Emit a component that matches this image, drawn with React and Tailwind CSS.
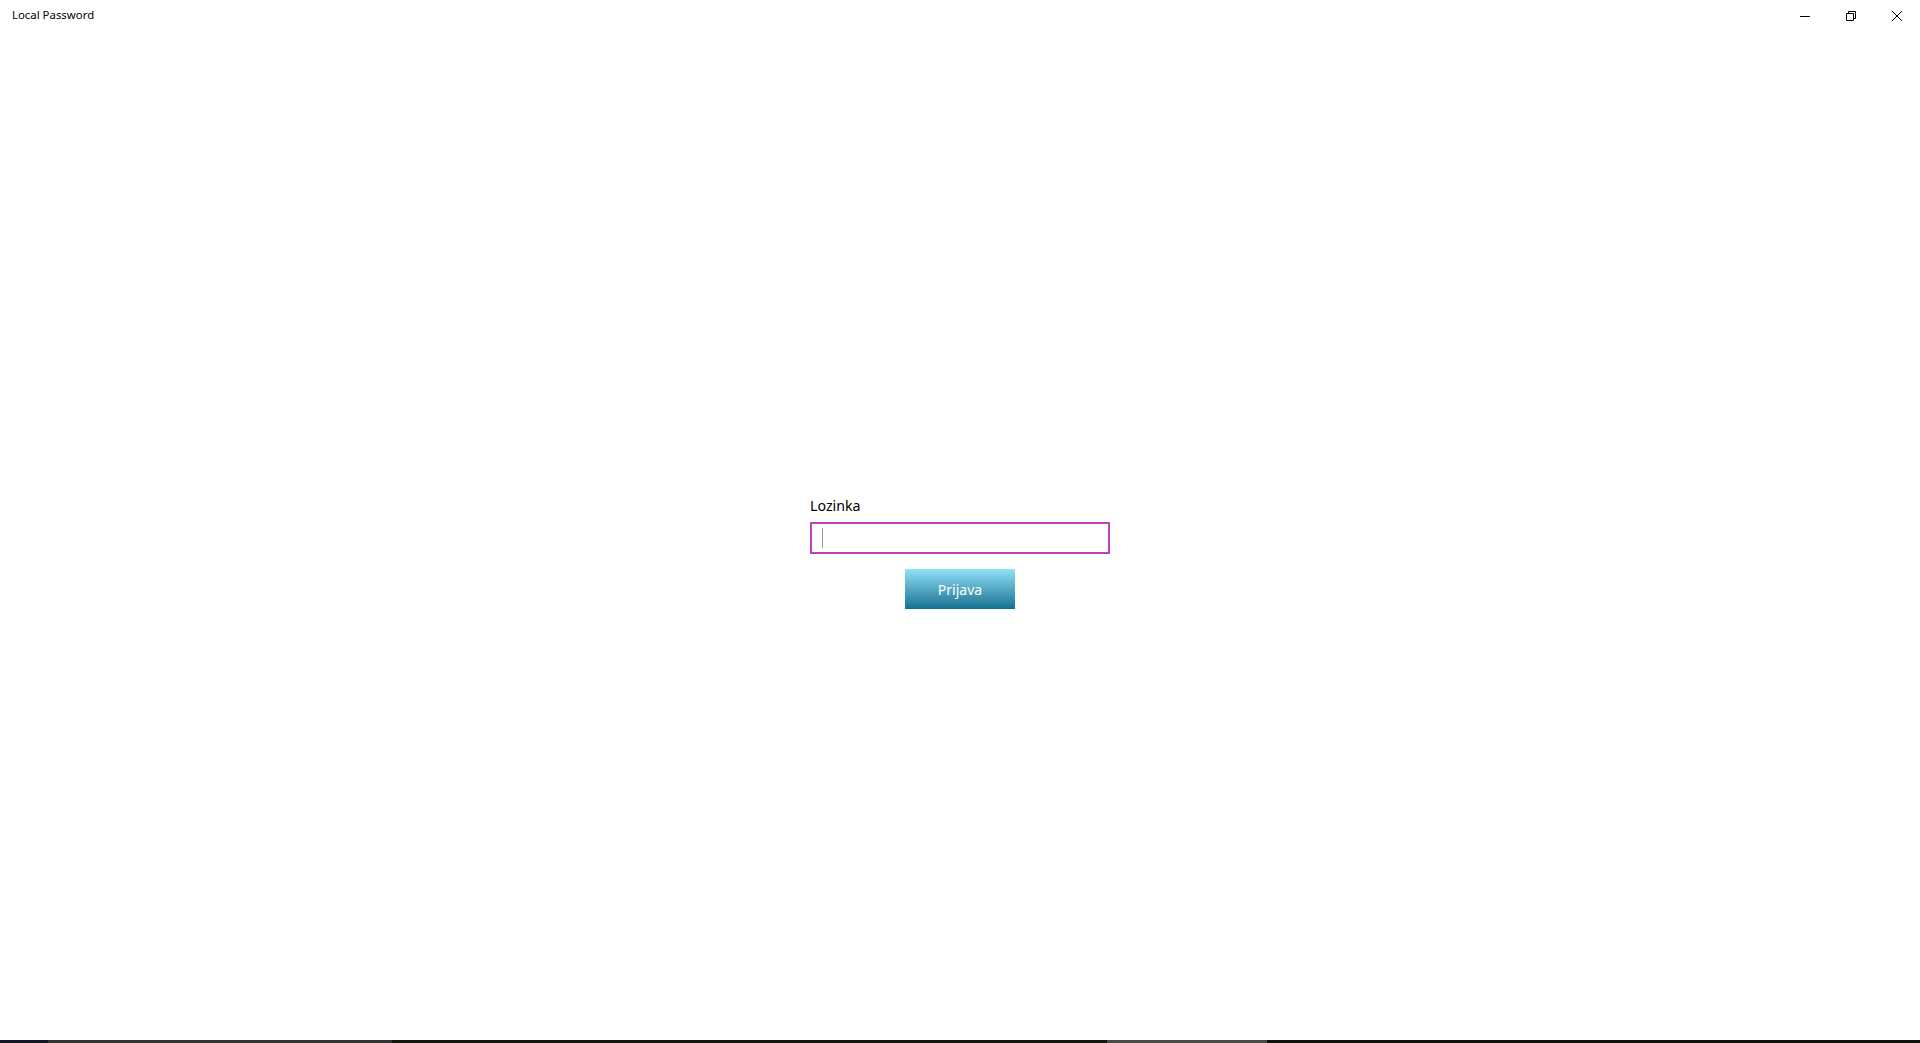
export default function App() {
  return (
    <div
      className="flex h-[1043px] w-[1920px] flex-col overflow-hidden bg-white text-black"
      style={{ fontFamily: '"Segoe UI", "Noto Sans", sans-serif' }}
    >
      {/* title bar */}
      <div className="flex h-8 shrink-0 items-center justify-between">
        <span className="pb-[2px] pl-3 text-[11.4px]">Local Password</span>
        <div className="flex h-8">
          <div className="flex w-[46px] items-center justify-center">
            <svg width="10" height="10" viewBox="0 0 10 10">
              <path d="M0 5.5h10" stroke="#000" strokeWidth="1" />
            </svg>
          </div>
          <div className="flex w-[46px] items-center justify-center">
            <svg width="10" height="10" viewBox="0 0 10 10" fill="none" stroke="#000" strokeWidth="1">
              <path d="M0.5 2.5h7v7h-7z" />
              <path d="M2.5 2.5v-2h7v7h-2" />
            </svg>
          </div>
          <div className="flex w-[46px] items-center justify-center">
            <svg width="10" height="10" viewBox="0 0 10 10">
              <path d="M0 0L10 10M10 0L0 10" stroke="#000" strokeWidth="1" />
            </svg>
          </div>
        </div>
      </div>

      {/* content */}
      <div className="flex flex-1 items-center justify-center pt-[33px]">
        <div className="flex w-[300px] flex-col">
          <label className="text-[14.2px] leading-[19px]">Lozinka</label>
          <div className="mt-[7px] flex h-8 items-center border-2 border-[#c040b8] px-[10px]">
            <div className="h-5 w-px bg-[#999]" />
          </div>
          <button className="mx-auto mt-[15px] h-10 w-[110px] bg-gradient-to-b from-[#8fe2f7] to-[#0e7290] text-[14px] text-white">
            Prijava
          </button>
        </div>
      </div>

      {/* taskbar edge */}
      <div className="flex h-[3px] shrink-0">
        <div className="w-[48px] bg-[#0f1727]" />
        <div className="w-[344px] bg-[#333333]" />
        <div className="w-[715px] bg-[#15160e]" />
        <div className="w-[160px] bg-[#4b4b46]" />
        <div className="flex-1 bg-[#10120b]" />
      </div>
    </div>
  );
}
